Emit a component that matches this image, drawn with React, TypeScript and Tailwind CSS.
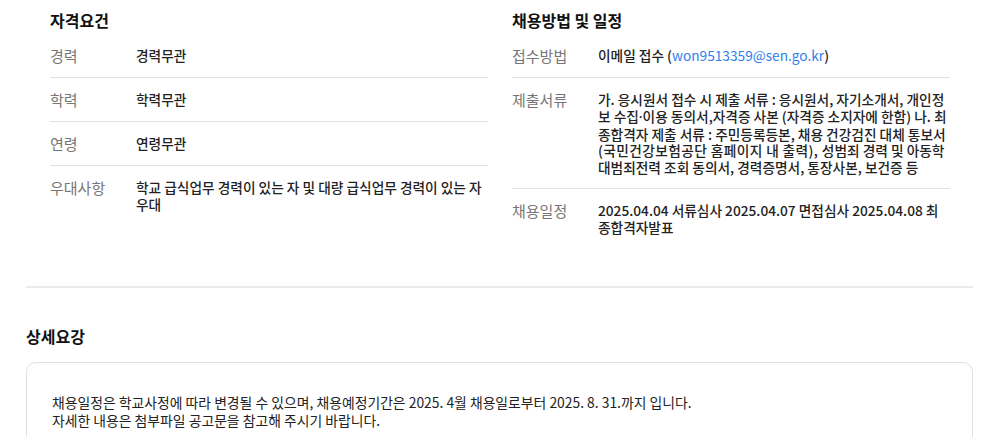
const FONT = "font-['Noto_Sans_CJK_KR','Noto_Sans',sans-serif]";

type Row = { label: string; value: React.ReactNode };

const requirements: Row[] = [
  { label: "경력", value: "경력무관" },
  { label: "학력", value: "학력무관" },
  { label: "연령", value: "연령무관" },
  {
    label: "우대사항",
    value: "학교 급식업무 경력이 있는 자 및 대량 급식업무 경력이 있는 자 우대",
  },
];

const process: Row[] = [
  {
    label: "접수방법",
    value: (
      <>
        이메일 접수 (<span className="text-[#2f80ed] font-normal">won9513359@sen.go.kr</span>)
      </>
    ),
  },
  {
    label: "제출서류",
    value: (
      <>
        가. 응시원서 접수 시 제출 서류 : 응시원서, 자기소개서, 개인정보 수집
        <span className="font-['Noto_Sans',sans-serif]">·</span>이용 동의서,자격증 사본 (자격증
        소지자에 한함) 나. 최종합격자 제출 서류 : 주민등록등본, 채용 건강검진 대체 통보서
        <span className="tracking-[0.4px]">(국민건강보험공단 홈페이지 내 출력), </span>성범죄 경력
        및 아동학대범죄전력 조회 동의서, 경력증명서, 통장사본, 보건증 등
      </>
    ),
  },
  {
    label: "채용일정",
    value: "2025.04.04 서류심사 2025.04.07 면접심사 2025.04.08 최종합격자발표",
  },
];

function InfoTable({ title, rows }: { title: string; rows: Row[] }) {
  return (
    <section className="w-[438px]">
      <h3 className="text-[16px] leading-[20px] font-bold text-[#111]">{title}</h3>
      <dl className="mt-[4px]">
        {rows.map((r, i) => (
          <div
            key={r.label}
            className={
              "flex items-start pt-[13px] pb-[12px] " +
              (i < rows.length - 1 ? "border-b border-[#e2e2e2]" : "")
            }
          >
            <dt className="w-[86px] shrink-0 text-[15px] leading-[18px] text-[#767676]">
              {r.label}
            </dt>
            <dd className="flex-1 text-[13.7px] leading-[16.8px] text-[#222] font-medium break-all">
              {r.value}
            </dd>
          </div>
        ))}
      </dl>
    </section>
  );
}

export default function App() {
  return (
    <div className={`${FONT} bg-white w-[1007px] h-[437px] overflow-hidden px-[26px] pt-[10px]`}>
      <div className="flex gap-[24px] ml-[24px] w-[900px]">
        <InfoTable title="자격요건" rows={requirements} />
        <InfoTable title="채용방법 및 일정" rows={process} />
      </div>

      <hr className="mt-[38px] border-0 h-[2px] bg-[#ebebeb] w-[947px]" />

      <h3 className="mt-[38px] text-[16px] leading-[20px] font-bold text-[#111]">상세요강</h3>

      <div className="mt-[16px] w-[947px] rounded-[10px] border border-[#e0e0e0] px-[25px] pt-[30px] pb-[30px] text-[13.85px] leading-[18px] text-[#222]">
        <p>
          채용일정은 학교사정에 따라 변경될 수 있으며, 채용예정기간은 2025. 4월 채용일로부터 2025. 8.
          31.까지 입니다.
        </p>
        <p>자세한 내용은 첨부파일 공고문을 참고해 주시기 바랍니다.</p>
      </div>
    </div>
  );
}
